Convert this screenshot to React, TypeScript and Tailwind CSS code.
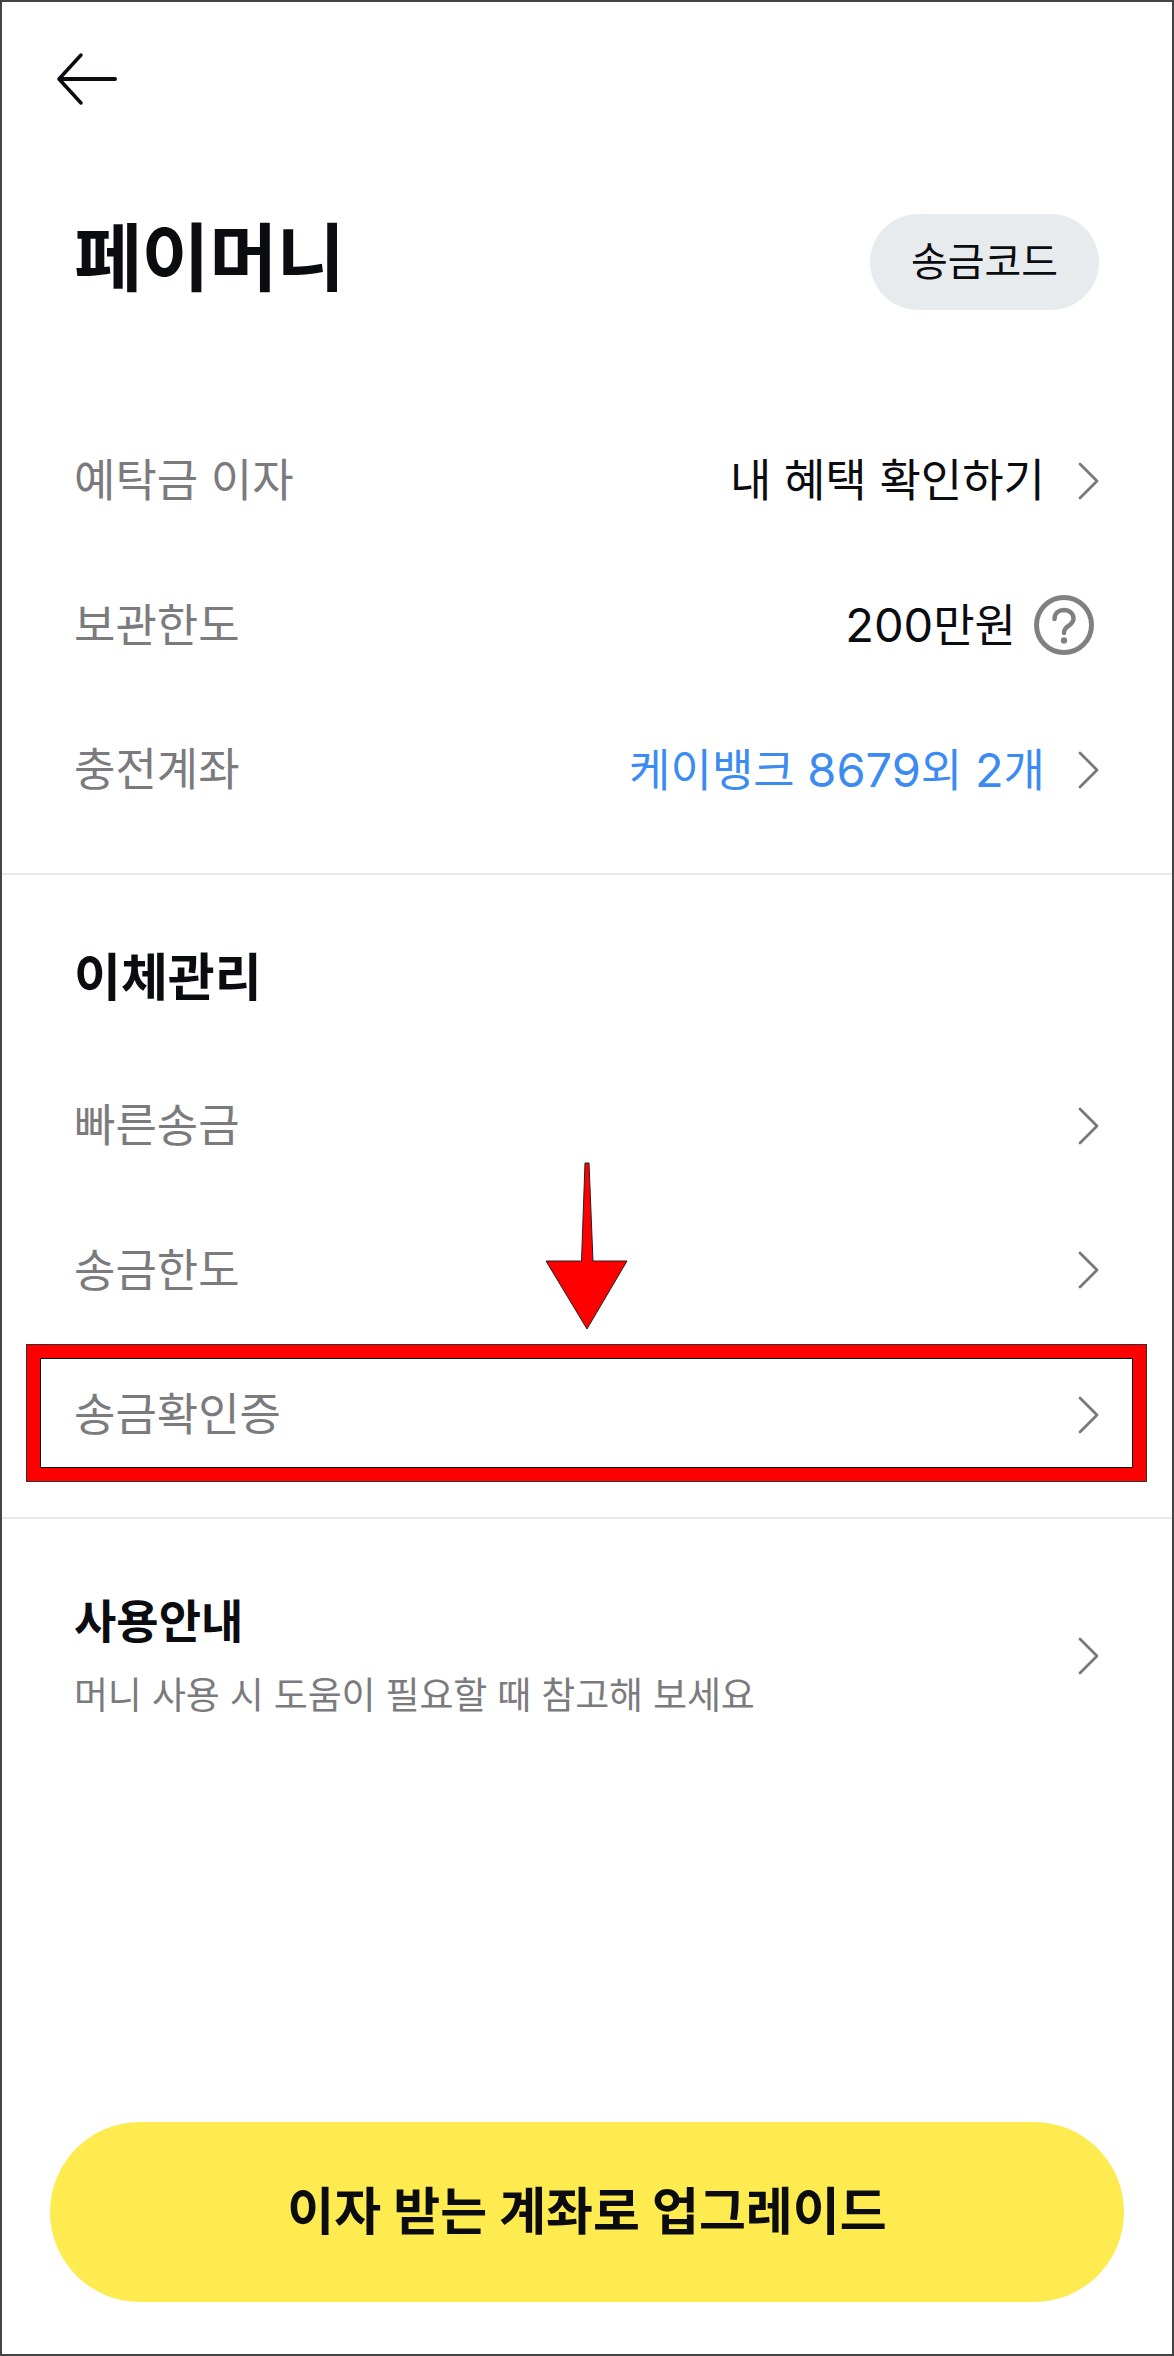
const Chevron = () => (
  <svg width="22" height="38" viewBox="0 0 22 38" fill="none" stroke="#787878" strokeWidth="2.8" strokeLinecap="round" strokeLinejoin="round" className="shrink-0">
    <path d="M3 2 L20 19 L3 36" />
  </svg>
);

const HelpIcon = () => (
  <svg width="60" height="60" viewBox="0 0 60 60" fill="none" className="shrink-0">
    <circle cx="30" cy="30" r="27.5" stroke="#808080" strokeWidth="5" />
    <path d="M20.5 24 C20.5 18 25 15 30 15 C35.5 15 39.5 18.5 39.5 23.5 C39.5 29 34 30.5 31.5 33.5 C30.5 34.8 30 36 30 38" stroke="#808080" strokeWidth="4.5" strokeLinecap="round" />
    <circle cx="30" cy="45.5" r="3.2" fill="#808080" />
  </svg>
);

interface RowProps {
  label: string;
  children?: React.ReactNode;
}

const Row = ({ label, children }: RowProps) => (
  <div className="h-[144.5px] flex items-center justify-between pl-[72px] pr-[73px]">
    <span className="text-[45px] text-[#7b7b7e]">{label}</span>
    <div className="flex items-center">{children}</div>
  </div>
);

export default function App() {
  return (
    <div
      className="relative w-[1174px] h-[2356px] box-border border-2 border-[#444444] bg-white flex flex-col text-[#0b0c10] overflow-hidden"
      style={{ fontFamily: 'Inter, "Noto Sans CJK KR", sans-serif' }}
    >
      <div className="h-[181px] pl-[54px] pt-[50px]">
        <svg width="62" height="54" viewBox="0 0 62 54" fill="none" stroke="#0b0c10" strokeLinecap="round" strokeLinejoin="round">
          <path d="M25 3 L3 27 L25 51" strokeWidth="3.5" />
          <path d="M4 27 H59" strokeWidth="4" />
        </svg>
      </div>

      <div className="h-[158px] flex items-center justify-between pl-[72px] pr-[73px]">
        <h1 className="mb-[8px] text-[74px] tracking-[-0.5px] font-bold leading-none">페이머니</h1>
        <button className="w-[229px] h-[96px] rounded-full bg-[#e8ebee] text-[40px] flex items-center justify-center">
          송금코드
        </button>
      </div>

      <div className="pt-[67.5px]">
        <Row label="예탁금 이자">
          <span className="text-[45px] mr-[32px]">내 혜택 확인하기</span>
          <Chevron />
        </Row>
        <Row label="보관한도">
          <span className="text-[45px] mr-[18px]"><span className="text-[47px]">200</span>만원</span>
          <div className="mr-[5px]"><HelpIcon /></div>
        </Row>
        <Row label="충전계좌">
          <span className="text-[45px] mr-[32px] text-[#3b8bf0]">
            케이뱅크 <span className="text-[47px]">8679</span>외 <span className="text-[47px]">2</span>개
          </span>
          <Chevron />
        </Row>
      </div>

      <div className="mt-[31px] h-[2px] bg-[#e8e8e8]" />

      <h2 className="mt-[72px] pl-[72px] text-[51px] font-bold leading-[62px]">이체관리</h2>

      <div className="mt-[44.5px]">
        <Row label="빠른송금"><Chevron /></Row>
        <Row label="송금한도"><Chevron /></Row>
        <Row label="송금확인증"><Chevron /></Row>
      </div>

      <div className="mt-[30px] h-[2px] bg-[#e8e8e8]" />

      <div className="mt-[72px] pl-[72px] pr-[73px] flex items-center justify-between">
        <div>
          <div className="text-[46px] font-bold leading-[60px]">사용안내</div>
          <div className="mt-[20px] text-[37px] tracking-[-0.2px] leading-[50px] text-[#7b7b7e]">머니 사용 시 도움이 필요할 때 참고해 보세요</div>
        </div>
        <Chevron />
      </div>

      <div className="mt-auto mb-[52px] mx-[48px] h-[180px] rounded-full bg-[#fdeb50] flex items-center justify-center">
        <span className="text-[51px] font-bold">이자 받는 계좌로 업그레이드</span>
      </div>

      {/* annotation overlay */}
      <div className="absolute left-[24px] top-[1342px] w-[1121px] h-[138px] box-border border border-[#333333]">
        <div className="w-full h-full box-border border-[13px] border-[#ff0000]">
          <div className="w-full h-full box-border border border-black" />
        </div>
      </div>
      <svg className="absolute left-[542px] top-[1158px]" width="90" height="175" viewBox="0 0 90 175" fill="none">
        <path d="M41 3 H45 L49 101 H83 L43 169 L2 101 H37.5 Z" fill="#ff0000" stroke="#222222" strokeWidth="1" />
      </svg>
    </div>
  );
}
